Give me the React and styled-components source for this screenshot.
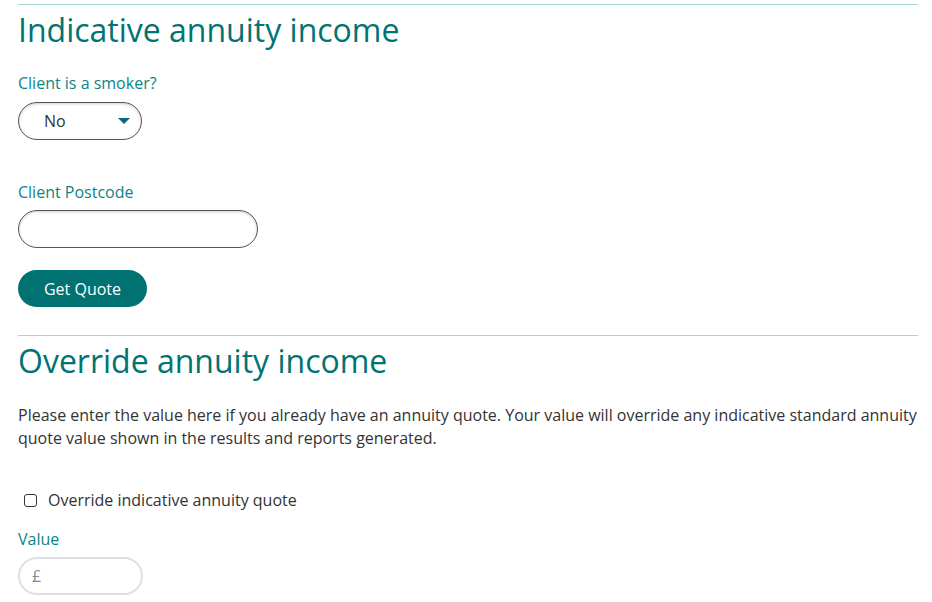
import React, { useState } from "react";
import styled, { createGlobalStyle } from "styled-components";

const GlobalStyle = createGlobalStyle`
  body {
    margin: 0;
    background: #fff;
    font-family: "Open Sans", "Noto Sans", sans-serif;
    color: #333;
  }
`;

const Page = styled.div`
  padding: 4px 14px 0 18px;
  width: 900px;
`;

const Section = styled.section`
  border-top: 1px solid #a6d3d3;
  display: flex;
  flex-direction: column;
  align-items: flex-start;
`;

const Title = styled.h2`
  margin: 5px 0 0;
  font-size: 32px;
  font-weight: 400;
  line-height: 40px;
  color: #007373;
`;

const Label = styled.label`
  display: block;
  font-size: 16px;
  line-height: 22px;
  color: #0c8585;
  margin-top: ${({ top }) => top}px;
`;

const SelectBox = styled.div`
  margin-top: 8px;
  width: 124px;
  height: 38px;
  box-sizing: border-box;
  border: 1px solid #555;
  border-radius: 19px;
  box-shadow: inset 0 1px 3px rgba(0, 0, 0, 0.2);
  display: flex;
  align-items: center;
  justify-content: space-between;
  padding: 0 11px 0 25px;
  font-size: 16px;
  color: #333;
`;

const Arrow = styled.span`
  width: 0;
  height: 0;
  border-left: 6px solid transparent;
  border-right: 6px solid transparent;
  border-top: 6px solid #0a6585;
`;

const TextInput = styled.input`
  margin-top: 7px;
  width: ${({ w }) => w}px;
  height: 38px;
  box-sizing: border-box;
  border: ${({ light }) => (light ? "2px solid #e0e0e0" : "1px solid #555")};
  border-radius: 19px;
  box-shadow: ${({ light }) => (light ? "none" : "inset 0 1px 3px rgba(0,0,0,0.2)")};
  padding: 0 12px;
  font-family: inherit;
  font-size: 16px;
  color: #333;
  outline: none;

  &::placeholder {
    color: #8a8a8a;
  }
`;

const Button = styled.button`
  margin: 22px 0 28px;
  height: 37px;
  width: 129px;
  border: none;
  border-radius: 19px;
  background: #007272;
  color: #fff;
  font-family: inherit;
  font-size: 16px;
  cursor: pointer;
`;

const Para = styled.p`
  margin: 23px 0 0;
  font-size: 16px;
  line-height: 23px;
  color: #333;
`;

const CheckRow = styled.label`
  margin-top: 39px;
  display: flex;
  align-items: center;
  gap: 11px;
  padding-left: 6px;
  font-size: 16px;
  color: #333;
  line-height: 22px;
  cursor: pointer;
`;

const Box = styled.span`
  box-sizing: border-box;
  width: 13px;
  height: 13px;
  border: 1.5px solid #333;
  border-radius: 3px;
  background: ${({ checked }) => (checked ? "#007272" : "#fff")};
`;

const App = () => {
  const [checked, setChecked] = useState(false);

  return (
    <Page>
      <GlobalStyle />
      <Section>
        <Title>Indicative annuity income</Title>
        <Label top={22}>Client is a smoker?</Label>
        <SelectBox>
          <span>No</span>
          <Arrow />
        </SelectBox>
        <Label top={41}>Client Postcode</Label>
        <TextInput w={240} />
        <Button>Get Quote</Button>
      </Section>
      <Section>
        <Title>Override annuity income</Title>
        <Para>
          Please enter the value here if you already have an annuity quote. Your value will override any
          indicative standard annuity quote value shown in the results and reports generated.
        </Para>
        <CheckRow onClick={() => setChecked(!checked)}>
          <Box checked={checked} />
          Override indicative annuity quote
        </CheckRow>
        <Label top={17}>Value</Label>
        <TextInput w={125} light placeholder="£" />
      </Section>
    </Page>
  );
};

export default App;
